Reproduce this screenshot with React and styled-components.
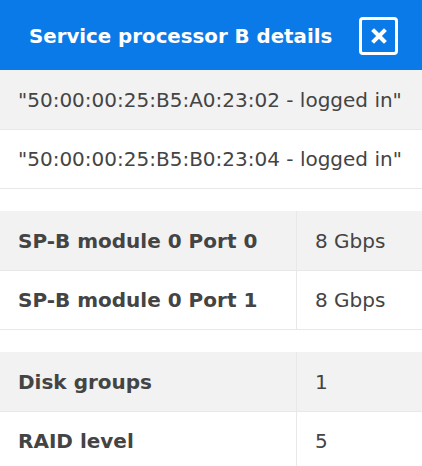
import React from 'react';
import styled, { createGlobalStyle } from 'styled-components';

const GlobalStyle = createGlobalStyle`
  html, body {
    margin: 0;
    padding: 0;
    background: #ffffff;
  }
  body {
    font-family: "DejaVu Sans", "Liberation Sans", sans-serif;
    color: #444444;
  }
`;

const Panel = styled.div`
  width: 422px;
  height: 466px;
  overflow: hidden;
  background: #ffffff;
`;

const Header = styled.div`
  height: 70px;
  background: #0b7ae9;
  display: flex;
  align-items: center;
  justify-content: space-between;
  padding: 2px 24px 0 29px;
  box-sizing: border-box;

  h1 {
    margin: 0;
    color: #ffffff;
    font-size: 19.8px;
    font-weight: 700;
  }
`;

const CloseButton = styled.button`
  width: 39px;
  height: 38px;
  border: 3px solid #ffffff;
  border-radius: 4px;
  background: transparent;
  display: flex;
  align-items: center;
  justify-content: center;
  padding: 0;
  cursor: pointer;
`;

const Row = styled.div`
  display: grid;
  grid-template-columns: ${(p) => (p.$split ? '296px 1fr' : '1fr')};
  height: ${(p) => (p.$striped ? '59px' : '58px')};
  background: ${(p) => (p.$striped ? '#f2f2f2' : '#ffffff')};
  border-bottom: 1px solid #e8e8e8;
  font-size: 20px;
`;

const Cell = styled.div`
  display: flex;
  align-items: center;
  padding-left: ${(p) => (p.$value ? '18px' : '18px')};
  font-weight: ${(p) => (p.$label ? 700 : 400)};
  border-left: ${(p) => (p.$value ? '1px solid #e8e8e8' : 'none')};
  white-space: nowrap;
`;

const Spacer = styled.div`
  height: 22px;
`;

const rows = [
  { label: 'SP-B module 0 Port 0', value: '8 Gbps' },
  { label: 'SP-B module 0 Port 1', value: '8 Gbps' },
];

const rows2 = [
  { label: 'Disk groups', value: '1' },
  { label: 'RAID level', value: '5' },
];

export default function App() {
  return (
    <Panel>
      <GlobalStyle />
      <Header>
        <h1>Service processor B details</h1>
        <CloseButton aria-label="Close">
          <svg width="16" height="16" viewBox="0 0 16 16">
            <path d="M3 3 L13 13 M13 3 L3 13" stroke="#ffffff" strokeWidth="4" strokeLinecap="square" />
          </svg>
        </CloseButton>
      </Header>
      <Row $striped>
        <Cell>"50:00:00:25:B5:A0:23:02 - logged in"</Cell>
      </Row>
      <Row>
        <Cell>"50:00:00:25:B5:B0:23:04 - logged in"</Cell>
      </Row>
      <Spacer />
      {rows.map((r, i) => (
        <Row key={r.label} $split $striped={i % 2 === 0}>
          <Cell $label>{r.label}</Cell>
          <Cell $value>{r.value}</Cell>
        </Row>
      ))}
      <Spacer />
      {rows2.map((r, i) => (
        <Row key={r.label} $split $striped={i % 2 === 0}>
          <Cell $label>{r.label}</Cell>
          <Cell $value>{r.value}</Cell>
        </Row>
      ))}
    </Panel>
  );
}
